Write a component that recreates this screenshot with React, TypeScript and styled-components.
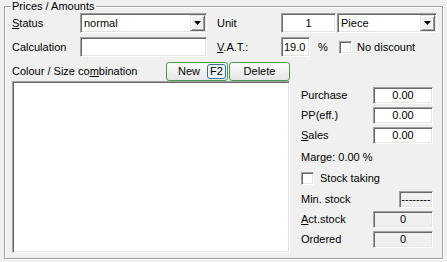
import React from "react";
import styled, { createGlobalStyle, css } from "styled-components";

const Global = createGlobalStyle`
  html, body { margin: 0; padding: 0; width: 447px; height: 262px; background: #f0f0f0; overflow: hidden; }
  body { font-family: "Liberation Sans", Arial, sans-serif; font-size: 11px; color: #000; }
  * { box-sizing: border-box; }
`;

const sunken = css`
  border-style: solid;
  border-width: 1px;
  border-color: #a0a0a0 #ffffff #ffffff #a0a0a0;
  box-shadow: inset 1px 1px 0 #696969, inset -1px -1px 0 #e3e3e3;
`;

const Page = styled.div`
  padding: 0 0 0 4px;
`;

const Frame = styled.fieldset`
  margin: 0;
  width: 439px;
  height: 259px;
  padding: 0 5px 0 7px;
  border: 1px solid #a0a0a0;
  box-shadow: 1px 1px 0 #ffffff, inset 1px 1px 0 #ffffff;
  min-width: 0;
`;

const Legend = styled.legend`
  padding: 0 1px;
  margin-left: -1px;
  line-height: 13px;
  background: #f0f0f0;
`;

const TopGrid = styled.div`
  display: grid;
  grid-template-columns: 68px 127px 74px 156px;
  grid-template-rows: 20px 20px;
  row-gap: 4px;
  align-items: center;
`;

const Label = styled.div<{ $indent?: number }>`
  padding-left: ${(p) => p.$indent ?? 0}px;
  white-space: nowrap;
  line-height: 13px;
`;

const Inline = styled.div<{ $gap?: number }>`
  display: flex;
  align-items: center;
  gap: ${(p) => p.$gap ?? 0}px;
  height: 20px;
`;

const Field = styled.div<{ $w: number; $h?: number; $align?: string; $bg?: string }>`
  ${sunken};
  width: ${(p) => p.$w}px;
  height: ${(p) => p.$h ?? 20}px;
  background: ${(p) => p.$bg ?? "#ffffff"};
  display: flex;
  align-items: center;
  justify-content: ${(p) => p.$align ?? "flex-start"};
  padding: 0 2px;
  line-height: 13px;
  white-space: nowrap;
  overflow: hidden;
`;

const Combo = styled.div<{ $w: number }>`
  ${sunken};
  width: ${(p) => p.$w}px;
  height: 20px;
  background: #ffffff;
  display: flex;
  align-items: stretch;
  padding: 1px;
`;

const ComboText = styled.div`
  flex: 1;
  display: flex;
  align-items: center;
  padding-left: 2px;
  line-height: 13px;
`;

const DropButton = styled.div`
  width: 15px;
  background: #f0f0f0;
  border-style: solid;
  border-width: 1px;
  border-color: #e3e3e3 #696969 #696969 #e3e3e3;
  box-shadow: inset 1px 1px 0 #ffffff, inset -1px -1px 0 #a0a0a0;
  display: flex;
  align-items: center;
  justify-content: center;
`;

const Arrow = () => (
  <svg width="7" height="4" viewBox="0 0 7 4" style={{ display: "block" }}>
    <polygon points="0,0 7,0 3.5,4" fill="#000" />
  </svg>
);

const Percent = styled.div`
  margin-left: 8px;
  width: 21px;
  line-height: 13px;
`;

const Check = styled.div`
  ${sunken};
  width: 13px;
  height: 13px;
  background: #ffffff;
  flex: none;
`;

const CheckLine = styled.div<{ $gap: number }>`
  display: flex;
  align-items: center;
  gap: ${(p) => p.$gap}px;
  line-height: 13px;
  white-space: nowrap;
`;

const Body = styled.div`
  display: flex;
  margin-top: 5px;
`;

const LeftCol = styled.div`
  width: 278px;
  display: flex;
  flex-direction: column;
`;

const ListHeader = styled.div`
  display: flex;
  align-items: center;
  height: 19px;
  gap: 1px;
`;

const HeaderLabel = styled.div`
  flex: 1;
  line-height: 13px;
  white-space: nowrap;
`;

const Btn = styled.div<{ $w: number; $center?: boolean }>`
  width: ${(p) => p.$w}px;
  height: 19px;
  border: 1px solid #4c9a4c;
  border-radius: 3px;
  background: linear-gradient(#fcfcfc, #e6e6e6);
  display: flex;
  align-items: center;
  justify-content: ${(p) => (p.$center ? "center" : "flex-start")};
  padding-left: ${(p) => (p.$center ? 0 : 11)}px;
  line-height: 13px;
`;

const Key = styled.span`
  margin-left: auto;
  margin-right: 1px;
  width: 19px;
  height: 15px;
  border: 1px solid #3f6c9c;
  border-radius: 3px;
  background: #eef4fa;
  display: flex;
  align-items: center;
  justify-content: center;
`;

const ListBox = styled.div`
  ${sunken};
  height: 172px;
  background: #ffffff;
`;

const RightCol = styled.div`
  margin-left: 11px;
  width: 132px;
  padding-top: 25px;
  display: grid;
  grid-template-columns: 72px 60px;
  grid-template-rows: 17px 17px 17px 20px 17px 18px 17px 17px;
  row-gap: 3px;
  align-items: center;
  align-content: start;
`;

const Span2 = styled.div`
  grid-column: 1 / span 2;
  line-height: 13px;
  white-space: nowrap;
`;

const RightField = styled(Field)`
  justify-self: end;
`;

export default function App() {
  return (
    <>
      <Global />
      <Page>
        <Frame>
          <Legend>Prices / Amounts</Legend>
          <TopGrid>
            <Label>
              <u>S</u>tatus
            </Label>
            <Combo $w={127}>
              <ComboText>normal</ComboText>
              <DropButton>
                <Arrow />
              </DropButton>
            </Combo>
            <Label $indent={10}>Unit</Label>
            <Inline $gap={1}>
              <Field $w={55} $align="center">
                1
              </Field>
              <Combo $w={100}>
                <ComboText>Piece</ComboText>
                <DropButton>
                  <Arrow />
                </DropButton>
              </Combo>
            </Inline>
            <Label>Calculation</Label>
            <Field $w={127} />
            <Label $indent={10}>
              <u>V</u>.A.T.:
            </Label>
            <Inline>
              <Field $w={29}>19.0</Field>
              <Percent>%</Percent>
              <CheckLine $gap={5}>
                <Check />
                No discount
              </CheckLine>
            </Inline>
          </TopGrid>
          <Body>
            <LeftCol>
              <ListHeader>
                <HeaderLabel>
                  Colour / Size co<u>m</u>bination
                </HeaderLabel>
                <Btn $w={62}>
                  New <Key>F2</Key>
                </Btn>
                <Btn $w={61} $center>
                  Delete
                </Btn>
              </ListHeader>
              <ListBox />
            </LeftCol>
            <RightCol>
              <Label>Purchase</Label>
              <RightField $w={60} $h={17} $align="center">
                0.00
              </RightField>
              <Label>PP(eff.)</Label>
              <RightField $w={60} $h={17} $align="center">
                0.00
              </RightField>
              <Label>
                <u>S</u>ales
              </Label>
              <RightField $w={60} $h={17} $align="center">
                0.00
              </RightField>
              <Span2>Marge: 0.00 %</Span2>
              <Span2>
                <CheckLine $gap={6}>
                  <Check />
                  Stock taking
                </CheckLine>
              </Span2>
              <Label>Min. stock</Label>
              <RightField $w={34} $h={17} $align="center" $bg="#f0f0f0">
                --------
              </RightField>
              <Label>
                <u>A</u>ct.stock
              </Label>
              <RightField $w={60} $h={17} $align="center" $bg="#f0f0f0">
                0
              </RightField>
              <Label>Ordered</Label>
              <RightField $w={60} $h={17} $align="center" $bg="#f0f0f0">
                0
              </RightField>
            </RightCol>
          </Body>
        </Frame>
      </Page>
    </>
  );
}
